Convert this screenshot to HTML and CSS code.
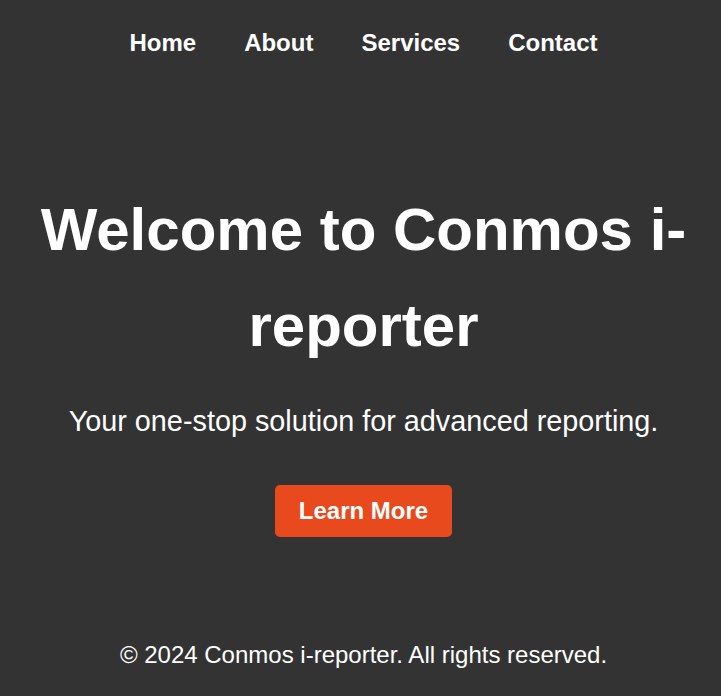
FILE: index.html
```html
<!DOCTYPE html>
<html lang="en">
<head>
<meta charset="utf-8">
<title>Conmos i-reporter</title>
<link rel="stylesheet" href="styles.css">
</head>
<body>
<header class="site-header">
  <nav class="nav">
    <a class="nav-link" href="#">Home</a>
    <a class="nav-link" href="#">About</a>
    <a class="nav-link" href="#">Services</a>
    <a class="nav-link" href="#">Contact</a>
  </nav>
</header>
<main class="hero">
  <h1 class="hero-title">Welcome to Conmos i-reporter</h1>
  <p class="hero-text">Your one-stop solution for advanced reporting.</p>
  <a class="btn" href="#">Learn More</a>
</main>
<footer class="site-footer">
  <p class="footer-text">&copy; 2024 Conmos i-reporter. All rights reserved.</p>
</footer>
</body>
</html>
```
FILE: styles.css
```css
html, body {
  margin: 0;
  padding: 0;
}
body {
  background: #333333;
  color: #ffffff;
  font-family: "Liberation Sans", Arial, sans-serif;
  font-size: 24px;
  min-height: 696px;
  display: flex;
  flex-direction: column;
  padding-left: 6px;
}
.site-header {
  padding: 29px 0 31px;
}
.nav {
  display: flex;
  justify-content: center;
  gap: 48px;
}
.nav-link {
  color: #ffffff;
  text-decoration: none;
  font-weight: bold;
}
.hero {
  text-align: center;
  padding: 0 20px;
  margin-top: 94px;
}
.hero-title {
  font-size: 60px;
  line-height: 1.6;
  margin: 0;
  font-weight: bold;
}
.hero-text {
  font-size: 28.8px;
  margin: 31px 0 47px;
}
.btn {
  display: inline-block;
  background: #e8491d;
  color: #ffffff;
  text-decoration: none;
  font-weight: bold;
  padding: 12px 24px;
  border-radius: 5px;
}
.site-footer {
  text-align: center;
  margin-top: 104px;
}
.footer-text {
  margin: 0;
}
```
